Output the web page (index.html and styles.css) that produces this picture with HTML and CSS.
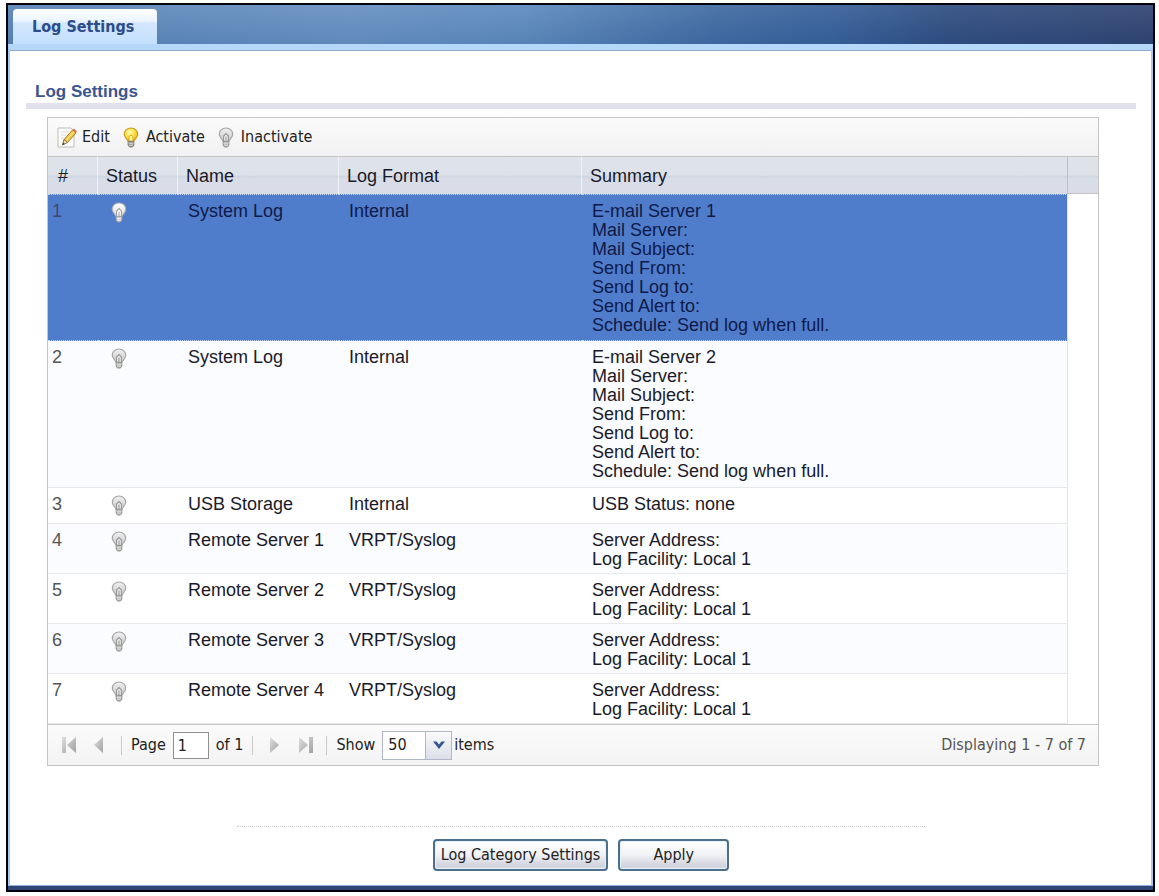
FILE: index.html
```html
<!DOCTYPE html>
<html lang="en">
<head>
<meta charset="utf-8">
<title>Log Settings</title>
<link rel="stylesheet" href="styles.css">
</head>
<body>
<svg class="defs" aria-hidden="true">
  <defs>
    <linearGradient id="grey" x1="0" y1="0" x2="0" y2="1"><stop offset="0" stop-color="#f1f1f1"/><stop offset="1" stop-color="#cacaca"/></linearGradient>
    <radialGradient id="gold" cx=".4" cy=".35" r=".7"><stop offset="0" stop-color="#fffbb0"/><stop offset=".6" stop-color="#fbdc3c"/><stop offset="1" stop-color="#e6b420"/></radialGradient>
    <linearGradient id="arrow" x1="0" y1="0" x2="1" y2="1"><stop offset="0" stop-color="#dedede"/><stop offset="1" stop-color="#a0a0a0"/></linearGradient>
    <symbol id="bulb" viewBox="0 0 16 22">
      <path d="M8 1C3.800 1 1 4 1 7.500c0 3.500 2.500 4 3.500 7h7c1-3 3.500-3.500 3.500-7C15 4 12.200 1 8 1z" fill="url(#grey)" stroke="#a6a6a6" stroke-width="1.200"/>
      <path d="M5.500 15V9.500L8 7l2.500 2.500V15" fill="#f0f0f0" stroke="#969696" stroke-width="1.200"/>
      <path d="M8 10v5" stroke="#8a8a8a"/>
      <path d="M5 15h6v4l-1.500 2h-3L5 19z" fill="#b4b4b4" stroke="#8e8e8e"/>
      <path d="M5.500 17h5M6 19h4" stroke="#e6e6e6"/>
    </symbol>
    <symbol id="bulb-on" viewBox="0 0 16 22">
      <path d="M8 1C3.800 1 1 4 1 7.500c0 3.500 2.500 4 3.500 7h7c1-3 3.500-3.500 3.500-7C15 4 12.200 1 8 1z" fill="url(#gold)" stroke="#cc9a1c" stroke-width="1.200"/>
      <path d="M6 14.500V10l2-1.500 2 1.500v4.500" fill="#fff3a0" stroke="#dca51c"/>
      <path d="M5 15h6v4l-1.500 2h-3L5 19z" fill="#9b968a" stroke="#817c70"/>
      <path d="M5.500 17h5M6 19h4" stroke="#ddd"/>
    </symbol>
  </defs>
</svg>
<div class="window">
  <header class="tabs"><a class="tab" href="#log">Log Settings</a></header>
  <main class="content" id="log">
    <h1 class="title">Log Settings</h1>
    <section class="grid">
      <div class="toolbar">
        <button class="tool" type="button"><svg class="pencil" viewBox="0 0 20 21"><path d="M1 1h13l3 3v16H1z" fill="#fcfcfc" stroke="#bdbdbd"/><path d="M4 5h8M4 8h5M4 11h3" stroke="#ddd"/><path d="M7 12.500L15.500 3l3.500 3-8.500 9.500z" fill="#f5c842" stroke="#ad7a25"/><path d="M9 13.500l8-9" stroke="#fff0a0"/><path d="M7 12.500l3.500 3L5.500 18z" fill="#f4dfc0" stroke="#8d7044"/><path d="M5.500 18l.8-2.200 1.500 1.200z" fill="#333"/><path d="M15.500 3L17 1.500 20 4.500 19 6z" fill="#d9755c"/></svg>Edit</button>
        <button class="tool" type="button"><svg class="bulb"><use href="#bulb-on"/></svg>Activate</button>
        <button class="tool" type="button"><svg class="bulb"><use href="#bulb"/></svg>Inactivate</button>
      </div>
      <table class="logs">
        <colgroup><col class="c-num"><col class="c-status"><col class="c-name"><col class="c-format"><col><col class="c-gutter"></colgroup>
        <thead><tr><th>#</th><th>Status</th><th>Name</th><th>Log Format</th><th>Summary</th><td></td></tr></thead>
        <tbody>
          <tr class="tall selected"><td>1</td><td><svg class="bulb"><use href="#bulb"/></svg></td><td>System Log</td><td>Internal</td><td>E-mail Server 1<br>Mail Server:<br>Mail Subject:<br>Send From:<br>Send Log to:<br>Send Alert to:<br>Schedule: Send log when full.</td><td></td></tr>
          <tr class="tall"><td>2</td><td><svg class="bulb"><use href="#bulb"/></svg></td><td>System Log</td><td>Internal</td><td>E-mail Server 2<br>Mail Server:<br>Mail Subject:<br>Send From:<br>Send Log to:<br>Send Alert to:<br>Schedule: Send log when full.</td><td></td></tr>
          <tr class="short"><td>3</td><td><svg class="bulb"><use href="#bulb"/></svg></td><td>USB Storage</td><td>Internal</td><td>USB Status: none</td><td></td></tr>
          <tr><td>4</td><td><svg class="bulb"><use href="#bulb"/></svg></td><td>Remote Server 1</td><td>VRPT/Syslog</td><td>Server Address:<br>Log Facility: Local 1</td><td></td></tr>
          <tr><td>5</td><td><svg class="bulb"><use href="#bulb"/></svg></td><td>Remote Server 2</td><td>VRPT/Syslog</td><td>Server Address:<br>Log Facility: Local 1</td><td></td></tr>
          <tr><td>6</td><td><svg class="bulb"><use href="#bulb"/></svg></td><td>Remote Server 3</td><td>VRPT/Syslog</td><td>Server Address:<br>Log Facility: Local 1</td><td></td></tr>
          <tr><td>7</td><td><svg class="bulb"><use href="#bulb"/></svg></td><td>Remote Server 4</td><td>VRPT/Syslog</td><td>Server Address:<br>Log Facility: Local 1</td><td></td></tr>
        </tbody>
      </table>
      <div class="pager">
        <button class="nav" type="button" aria-label="First page"><svg viewBox="0 0 16 18"><path d="M1 1h4v16H1zM15 1v16L6 9z" fill="url(#arrow)"/></svg></button>
        <button class="nav" type="button" aria-label="Previous page"><svg viewBox="0 0 16 18"><path d="M11 1v16L2 9z" fill="url(#arrow)"/></svg></button>
        <span class="sep"></span>
        <label for="page">Page</label>
        <input class="page" id="page" type="text" value="1">
        <span>of 1</span>
        <span class="sep"></span>
        <button class="nav" type="button" aria-label="Next page"><svg viewBox="0 0 16 18"><path d="M4 1v16l9-8z" fill="url(#arrow)"/></svg></button>
        <button class="nav" type="button" aria-label="Last page"><svg viewBox="0 0 16 18"><path d="M2 1v16l9-8zM12 1h4v16h-4z" fill="url(#arrow)"/></svg></button>
        <span class="sep"></span>
        <label for="size">Show</label>
        <span class="sizes"><span class="combo"><select id="size"><option>50</option></select><span class="drop"><svg viewBox="0 0 14 10"><path d="M1 1.500L7 9l6-7.500H9.500L7 4.500 4.500 1.500z" fill="#34558b"/></svg></span></span>items</span>
        <span class="count">Displaying 1 - 7 of 7</span>
      </div>
    </section>
    <footer class="actions">
      <button class="action" type="button">Log Category Settings</button>
      <button class="action apply" type="button">Apply</button>
    </footer>
  </main>
</div>
</body>
</html>
```
FILE: styles.css
```css
* { box-sizing: border-box; }
body {
  margin: 0;
  padding: 3px 4px 5px 6px;
  min-height: 100vh;
  display: flex;
  background: #fff;
  color: #222;
  font: 16px/20px "DejaVu Sans Condensed", "DejaVu Sans", sans-serif;
}
button, input, select { font: inherit; color: inherit; }
.defs { position: absolute; width: 0; height: 0; }
.window {
  flex: 1;
  display: flex;
  flex-direction: column;
  border: 2px solid #02020c;
  background: #2f4674;
}
.tabs {
  height: 39px;
  padding: 4px 5px 0;
  display: flex;
  background:
    linear-gradient(to bottom, rgba(255,255,255,.08), rgba(20,50,100,.08)),
    linear-gradient(to right, #5884b6 0, #6690c1 30%, #5c8abd 45%, #3f6aa2 62%, #36609a 72%, #2f4d80 82%, #2f4471 100%);
}
.tab {
  width: 144px;
  padding: 8px 0 0 19px;
  border-radius: 4px 4px 0 0;
  background: linear-gradient(#fff 0, #eaf4fe 35%, #d3e7fc 40%, #c4e0fd 100%);
  color: #2c4c8c;
  font-weight: bold;
  text-decoration: none;
}
.content {
  flex: 1;
  margin-bottom: 4px;
  padding: 30px 15px 14px 16px;
  border: 2px solid #a9c8ee;
  border-top: 6px solid #b5d8fa;
  border-bottom: 1px solid #91aedd;
  background: #fff;
  box-shadow: inset 0 1px #8fa9cb;
}
.title {
  margin: 0;
  padding: 0 0 0 9px;
  border-bottom: 6px solid #e0e1ec;
  color: #3a568f;
  font: bold 17px/23px "Liberation Sans", sans-serif;
}
.grid {
  margin: 8px 37px 0 21px;
  border: 1px solid #c5c5c5;
}
.toolbar {
  height: 38px;
  padding: 0 9px;
  display: flex;
  align-items: center;
  gap: 11px;
  background: linear-gradient(#fbfbfb, #f1f1f1);
}
.tool {
  padding: 0;
  border: 0;
  background: none;
  display: flex;
  align-items: center;
  gap: 5px;
}
.pencil { width: 20px; height: 21px; }
.bulb { width: 16px; height: 21px; display: block; }
.tool .bulb { margin: 0 2px; }
.logs {
  width: 100%;
  table-layout: fixed;
  border-collapse: separate;
  border-spacing: 0;
  color: #1a1a2a;
  font: 18px/19px "Liberation Sans", sans-serif;
}
.c-num { width: 50px; }
.c-status { width: 80px; }
.c-name { width: 161px; }
.c-format { width: 243px; }
.c-gutter { width: 30px; }
.logs thead tr {
  height: 38px;
  background: linear-gradient(#dfe4ea 0, #dde2e8 50%, #cfd6e2 54%, #d9dde7 60%, #dadde8 100%);
}
.logs th {
  padding: 2px 0 0 8px;
  border-top: 1px solid #c3c3c3;
  border-right: 1px solid #edf0f4;
  text-align: left;
  font-weight: normal;
}
.logs th:nth-child(1) { padding-left: 10px; }
.logs th:nth-child(5) { border-right-color: #bcc0c6; }
.logs thead td { border-top: 1px solid #c3c3c3; border-bottom: 1px solid #c3c3c3; }
.logs tbody tr { height: 50px; }
.logs tbody tr.tall { height: 147px; }
.logs tbody tr.short { height: 36px; }
.logs tbody td {
  padding: 7px 0 4px 10px;
  border-bottom: 1px solid #e8e8ec;
  vertical-align: top;
}
.logs tbody td:nth-child(1) { padding-left: 4px; color: #555; }
.logs tbody td:nth-child(2) { padding-left: 13px; }
.logs tbody td:nth-child(5) { border-right: 1px solid #e3e3e8; }
.logs tbody td:nth-child(6) { border-bottom: 0; }
.logs tbody tr:nth-child(even) td:not(:last-child) { background: #fafcff; }
.logs tbody tr.selected td:not(:last-child) {
  border-top: 1px dotted #c8d8f2;
  border-bottom: 1px dotted #c8d8f2;
  background: #4f7dcc;
  color: #101a48;
}
.logs tbody tr.selected td:first-child { color: #3d4a70; }
.selected .bulb { filter: brightness(1.080); }
.pager {
  height: 41px;
  padding: 0 12px 0 9px;
  display: flex;
  align-items: center;
  gap: 7px;
  border-top: 1px solid #c5c5c5;
  background: linear-gradient(#fbfbfb, #f3f3f3);
}
.nav {
  width: 24px;
  height: 24px;
  padding: 0;
  border: 0;
  background: none;
}
.nav svg { width: 16px; height: 18px; display: block; margin: 0 auto; }
.sep { width: 1px; height: 19px; margin: 0 2px; background: #c9c9c9; }
.page {
  width: 36px;
  height: 27px;
  padding: 0 4px;
  border: 1px solid #8f8f8f;
  background: #fff;
}
.sizes { display: flex; align-items: center; gap: 2px; }
.combo { width: 70px; height: 29px; display: flex; border: 1px solid #b2b7c7; background: #fff; }
.combo select {
  flex: 1;
  min-width: 0;
  padding: 0 5px;
  border: 0;
  appearance: none;
  background: none;
}
.drop {
  width: 26px;
  display: flex;
  align-items: center;
  justify-content: center;
  border-left: 1px solid #b2b7c7;
  background: linear-gradient(#fafafc, #dcdfe9);
  pointer-events: none;
}
.drop svg { width: 14px; height: 10px; }
.count { margin-left: auto; color: #555; }
.actions {
  width: 62%;
  margin: 60px auto 0;
  padding-top: 12px;
  display: flex;
  justify-content: center;
  gap: 10px;
  border-top: 1px dotted #c9c9c9;
}
.action {
  height: 32px;
  padding: 0 6px;
  border: 2px solid #4d6f8c;
  border-radius: 4px;
  background: linear-gradient(#fff 0, #f1f2f6 50%, #cfd1dc 90%, #dfe2ea 100%);
  box-shadow: inset 0 0 0 1px #e2f2fa;
}
.apply { width: 111px; }
```
